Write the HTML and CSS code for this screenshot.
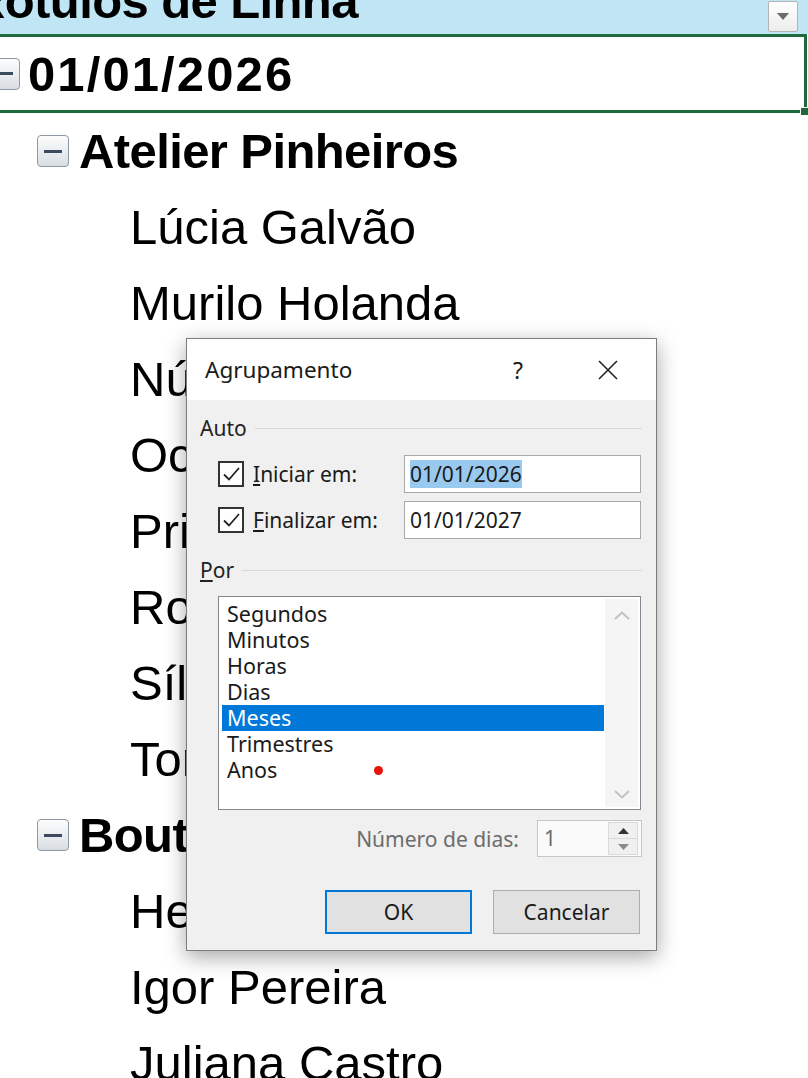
FILE: index.html
```html
<!DOCTYPE html>
<html lang="pt-BR">
<head>
    <meta charset="UTF-8">
    <meta name="viewport" content="width=device-width, initial-scale=1.0">
    <title>Agrupamento</title>
    <link rel="stylesheet" href="styles.css">
</head>
<body>
    <div class="sheet">
        <div class="row row-header">
            <span class="header-label">Rótulos de Linha</span>
            <span class="dropdown">
                <svg width="12" height="7" viewBox="0 0 12 7"><path d="M0 0h12L6 7z" fill="#6b6b6b"/></svg>
            </span>
        </div>
        <div class="row level0 selected">
            <span class="toggle"></span>
            <span>01/01/2026</span>
            <span class="fill-handle"></span>
        </div>
        <div class="row level1"><span class="toggle"></span><span>Atelier Pinheiros</span></div>
        <div class="row level2">Lúcia Galvão</div>
        <div class="row level2">Murilo Holanda</div>
        <div class="row level2">Núbia Rocha</div>
        <div class="row level2">Octávio Ramos</div>
        <div class="row level2">Priscila Nunes</div>
        <div class="row level2">Rodrigo Alves</div>
        <div class="row level2">Sílvia Martins</div>
        <div class="row level2">Tomás Ribeiro</div>
        <div class="row level1"><span class="toggle"></span><span>Boutique Centro</span></div>
        <div class="row level2">Heitor Lopes</div>
        <div class="row level2">Igor Pereira</div>
        <div class="row level2">Juliana Castro</div>
    </div>

    <div class="dialog">
        <div class="dlg-title">
            <span class="dlg-name">Agrupamento</span>
            <span class="dlg-help">?</span>
            <span class="dlg-close">
                <svg width="20" height="20" viewBox="0 0 20 20"><path d="M1 1L19 19M19 1L1 19" stroke="#222" stroke-width="1.6" fill="none"/></svg>
            </span>
        </div>
        <div class="dlg-body">
            <div class="group-head"><span>Auto</span><span class="group-line"></span></div>

            <div class="field first">
                <label class="check-label">
                    <span class="checkbox">
                        <svg width="22" height="22" viewBox="0 0 22 22"><path d="M4 11.5L9 16.5L19 5" stroke="#222" stroke-width="1.8" fill="none"/></svg>
                    </span>
                    <span class="accel">Iniciar em:</span>
                </label>
                <div class="text-input"><span class="selected-text">01/01/2026</span></div>
            </div>
            <div class="field">
                <label class="check-label">
                    <span class="checkbox">
                        <svg width="22" height="22" viewBox="0 0 22 22"><path d="M4 11.5L9 16.5L19 5" stroke="#222" stroke-width="1.8" fill="none"/></svg>
                    </span>
                    <span class="accel">Finalizar em:</span>
                </label>
                <div class="text-input"><span>01/01/2027</span></div>
            </div>

            <div class="group-head por"><span class="accel">Por</span><span class="group-line"></span></div>

            <div class="listbox">
                <ul class="list-items">
                    <li>Segundos</li>
                    <li>Minutos</li>
                    <li>Horas</li>
                    <li>Dias</li>
                    <li class="active">Meses</li>
                    <li>Trimestres</li>
                    <li>Anos<span class="red-dot"></span></li>
                </ul>
                <div class="scrollbar">
                    <svg width="16" height="9" viewBox="0 0 16 9"><path d="M1 8L8 1.5L15 8" stroke="#c2c2c2" stroke-width="2" fill="none"/></svg>
                    <svg width="16" height="9" viewBox="0 0 16 9"><path d="M1 1L8 7.5L15 1" stroke="#c2c2c2" stroke-width="2" fill="none"/></svg>
                </div>
            </div>

            <div class="days-row">
                <span class="days-label">Número de dias:</span>
                <div class="spinner">
                    <span class="spin-value">1</span>
                    <div class="spin-buttons">
                        <span class="spin-btn"><svg width="11" height="6" viewBox="0 0 11 6"><path d="M0 6L5.5 0L11 6z" fill="#333"/></svg></span>
                        <span class="spin-btn"><svg width="11" height="6" viewBox="0 0 11 6"><path d="M0 0h11L5.5 6z" fill="#8a8a8a"/></svg></span>
                    </div>
                </div>
            </div>

            <div class="buttons">
                <button class="btn btn-default">OK</button>
                <button class="btn">Cancelar</button>
            </div>
        </div>
    </div>
</body>
</html>
```

FILE: styles.css
```css
body {
    margin: 0;
    width: 808px;
    height: 1078px;
    overflow: hidden;
    position: relative;
    background: #fff;
    font-family: "Liberation Sans", Arial, sans-serif;
}

/* pivot table rows */
.sheet {
    display: flex;
    flex-direction: column;
}

.row {
    height: 76px;
    flex-shrink: 0;
    display: flex;
    align-items: center;
    font-size: 49px;
    color: #000;
    white-space: nowrap;
    box-sizing: border-box;
}

.row-header {
    margin-top: -42px;
    padding-top: 10px;
    background: #c0e6f5;
    font-weight: bold;
    letter-spacing: -0.6px;
}

.header-label {
    margin-left: -30px;
}

.dropdown {
    margin-left: auto;
    margin-right: 10px;
    align-self: flex-end;
    margin-bottom: 2px;
    width: 30px;
    height: 31px;
    box-sizing: border-box;
    border: 1px solid #b4b4b4;
    border-radius: 2px;
    background: linear-gradient(#ffffff, #ececec);
    display: flex;
    align-items: center;
    justify-content: center;
}

.level0 {
    font-weight: bold;
    gap: 8px;
    letter-spacing: 2.1px;
}

.selected {
    height: 79px;
    width: 812px;
    margin-left: -5px;
    border: 3px solid #1d6b3d;
    position: relative;
}

.level0 .toggle {
    margin-left: -10px;
}

.fill-handle {
    position: absolute;
    right: -5px;
    bottom: -6px;
    width: 7px;
    height: 7px;
    background: #1d6b3d;
    border: 1px solid #fff;
}

.level1 {
    font-weight: bold;
    padding-left: 37px;
    gap: 10px;
    letter-spacing: -0.6px;
}

.level2 {
    padding-left: 130px;
}

.toggle {
    width: 32px;
    height: 32px;
    flex-shrink: 0;
    box-sizing: border-box;
    border: 1px solid #8e97a4;
    border-radius: 4px;
    background: linear-gradient(#fdfdfd, #d9dde3);
    display: flex;
    align-items: center;
    justify-content: center;
}

.toggle::before {
    content: "";
    width: 18px;
    height: 3px;
    background: #3b4a5e;
}

/* grouping dialog */
.dialog {
    position: absolute;
    left: 186px;
    top: 338px;
    width: 471px;
    height: 613px;
    box-sizing: border-box;
    border: 1px solid #7c7c7c;
    background: #f0f0f0;
    box-shadow: 0 6px 20px rgba(0, 0, 0, 0.35);
    font-family: "Noto Sans", "Open Sans", sans-serif;
    font-size: 21px;
    color: #1a1a1a;
}

.dlg-title {
    height: 61px;
    background: #fff;
    display: flex;
    align-items: center;
    padding-left: 18px;
    font-size: 22.5px;
}

.dlg-help {
    margin-left: auto;
    width: 40px;
    text-align: center;
    font-size: 23px;
}

.dlg-close {
    width: 46px;
    margin-left: 47px;
    margin-right: 25px;
    display: flex;
    justify-content: center;
}

.dlg-body {
    padding: 0 14px 0 13px;
}

/* underlined access key */
.accel {
    display: inline-block;
}

.accel::first-letter {
    text-decoration: underline;
}

.group-head {
    margin-top: 17px;
    height: 22px;
    display: flex;
    align-items: center;
    gap: 8px;
    color: #222;
}

.group-head.por {
    margin-top: 20px;
}

.group-line {
    flex: 1;
    height: 1px;
    background: #d8d8d8;
}

.field {
    margin-top: 8px;
    height: 38px;
    display: flex;
    align-items: center;
    padding-left: 18px;
}

.field.first {
    margin-top: 16px;
}

.check-label {
    width: 186px;
    display: flex;
    align-items: center;
    gap: 9px;
}

.checkbox {
    width: 26px;
    height: 26px;
    box-sizing: border-box;
    border: 2px solid #333;
    background: #fff;
    display: flex;
    align-items: center;
    justify-content: center;
}

.text-input {
    width: 237px;
    height: 38px;
    box-sizing: border-box;
    border: 1px solid #a8a8a8;
    background: #fff;
    display: flex;
    align-items: center;
    padding-left: 5px;
    font-size: 21px;
}

.selected-text {
    background: #99c9ef;
}

.listbox {
    margin-top: 15px;
    margin-left: 18px;
    width: 423px;
    height: 214px;
    box-sizing: border-box;
    border: 1px solid #828790;
    background: #fff;
    display: flex;
    padding: 4px 2px 2px 3px;
}

.list-items {
    list-style: none;
    margin: 0;
    padding: 0;
    width: 382px;
    font-size: 21.5px;
}

.list-items li {
    height: 26px;
    line-height: 26px;
    padding-left: 5px;
    display: flex;
    align-items: center;
}

.list-items li.active {
    background: #0078d7;
    color: #fff;
}

.red-dot {
    width: 9px;
    height: 9px;
    border-radius: 50%;
    background: #e8140c;
    margin-left: 97px;
}

.scrollbar {
    margin-left: 1px;
    margin-top: -2px;
    width: 33px;
    background: #f5f5f5;
    display: flex;
    flex-direction: column;
    align-items: center;
    justify-content: space-between;
    padding: 12px 0 8px;
}

.days-row {
    margin-top: 10px;
    height: 37px;
    display: flex;
    justify-content: flex-end;
    align-items: center;
    gap: 18px;
}

.days-label {
    color: #6d6d6d;
}

.spinner {
    width: 105px;
    height: 37px;
    box-sizing: border-box;
    border: 1px solid #c6c6c6;
    background: #fafafa;
    display: flex;
}

.spin-value {
    flex: 1;
    padding-left: 6px;
    color: #6d6d6d;
    line-height: 35px;
}

.spin-buttons {
    width: 30px;
    margin: 1px 3px 1px 0;
    display: flex;
    flex-direction: column;
}

.spin-btn {
    flex: 1;
    display: flex;
    align-items: center;
    justify-content: center;
    background: #f0f0f0;
    border: 1px solid #dadada;
}

.spin-btn + .spin-btn {
    border-top: none;
}

.buttons {
    margin-top: 33px;
    display: flex;
    justify-content: flex-end;
    gap: 21px;
    padding-right: 2px;
}

.btn {
    width: 147px;
    height: 44px;
    box-sizing: border-box;
    border: 1px solid #adadad;
    background: #e1e1e1;
    font-family: "Noto Sans", "Open Sans", sans-serif;
    font-size: 21px;
    color: #1a1a1a;
}

.btn-default {
    border: 2px solid #0078d7;
}
```
